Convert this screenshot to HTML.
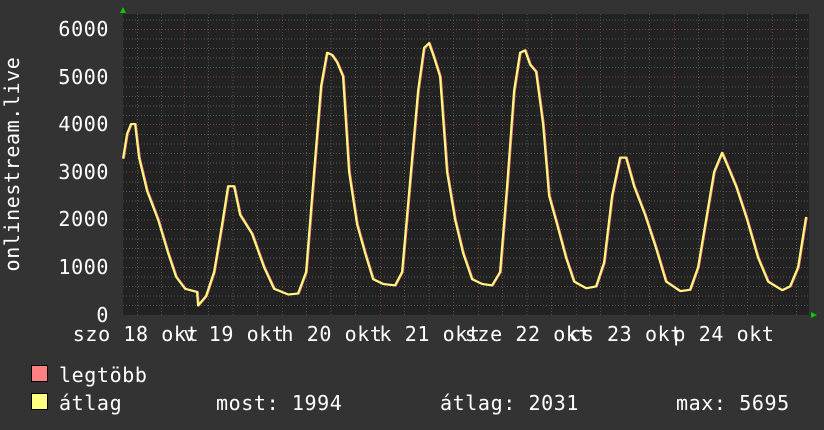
<!DOCTYPE html>
<html><head><meta charset="utf-8"><style>
html,body{margin:0;padding:0;background:#333;}
svg{display:block}
text{font-family:"DejaVu Sans Mono","Liberation Mono",monospace;font-size:20px;fill:#fff;letter-spacing:0.6px}
</style></head><body>
<svg width="824" height="430" xmlns="http://www.w3.org/2000/svg">
<rect width="824" height="430" fill="#333"/>
<rect x="123" y="14" width="686" height="301" fill="#222"/>
<g stroke="#555" stroke-width="1" stroke-dasharray="1,2">
<path d="M123 305.5H809M123 296H809M123 286.5H809M123 277H809M123 258H809M123 248.5H809M123 239H809M123 229.5H809M123 210.5H809M123 201H809M123 191.5H809M123 182H809M123 163H809M123 153.5H809M123 144H809M123 134.5H809M123 115.5H809M123 106H809M123 96.5H809M123 87H809M123 67.5H809M123 58H809M123 48.5H809M123 39H809M123 20H809"/>
<path d="M137.5 14V315M161.5 14V315M208.5 14V315M233 14V315M257.5 14V315M306.5 14V315M331 14V315M355.5 14V315M404.5 14V315M429 14V315M453.5 14V315M502.5 14V315M527 14V315M551.5 14V315M600.5 14V315M625 14V315M649.5 14V315M698.5 14V315M723 14V315M747.5 14V315M796.5 14V315"/>
</g>
<g stroke="#7a3a3a" stroke-width="1" stroke-dasharray="1,2">
<path d="M123 29.5H809M123 77H809M123 124.5H809M123 172H809M123 220H809M123 267.5H809"/>
<path d="M184.5 14V315M282.5 14V315M380.5 14V315M478.5 14V315M576.5 14V315M674.5 14V315M772.5 14V315"/>
</g>
<g fill="none" stroke-width="2" stroke-linejoin="round">
<polyline stroke="#ff8080" transform="translate(0.8,0)" points="123,158.6 127,133.7 131,124 135,124 139,157.6 147,191 158,219.6 168,253 176,276.8 185,288.8 197,292 198,305.5 206,296 214,272 222,224.4 228,186.2 234,186.2 240,214.8 252,233.9 264,267.3 274,288.8 288,294.5 298,293.5 306,272 314,171.9 321,86 327,52.7 332,55 337,62.2 343,76.5 349,171.9 357,224.4 365,253 373,279.2 383,284 395,285.4 402,272 410,181.4 418,90.8 424,47.9 429,43.1 434,57.4 440,76.5 447,171.9 455,219.6 463,253 472,279.2 482,284 492,285.4 500,272 507,186.2 514,90.8 520,52.7 525,50.3 530,64.6 536,71.7 543,124 549,195.7 557,224.4 566,257.8 574,281.6 586,288.3 596,286.4 604,262.5 612,195.7 620,157.6 626,157.6 634,186.2 645,214.8 656,248.2 666,281.6 680,291.1 690,289.7 698,267.3 706,219.6 714,171.9 722,152.8 728,167 736,186.2 747,219.6 758,257.8 768,281.6 782,290.2 790,286.4 798,267.3 806,217"/>
<polyline stroke="#ffff80" points="123,158.6 127,133.7 131,124 135,124 139,157.6 147,191 158,219.6 168,253 176,276.8 185,288.8 197,292 198,305.5 206,296 214,272 222,224.4 228,186.2 234,186.2 240,214.8 252,233.9 264,267.3 274,288.8 288,294.5 298,293.5 306,272 314,171.9 321,86 327,52.7 332,55 337,62.2 343,76.5 349,171.9 357,224.4 365,253 373,279.2 383,284 395,285.4 402,272 410,181.4 418,90.8 424,47.9 429,43.1 434,57.4 440,76.5 447,171.9 455,219.6 463,253 472,279.2 482,284 492,285.4 500,272 507,186.2 514,90.8 520,52.7 525,50.3 530,64.6 536,71.7 543,124 549,195.7 557,224.4 566,257.8 574,281.6 586,288.3 596,286.4 604,262.5 612,195.7 620,157.6 626,157.6 634,186.2 645,214.8 656,248.2 666,281.6 680,291.1 690,289.7 698,267.3 706,219.6 714,171.9 722,152.8 728,167 736,186.2 747,219.6 758,257.8 768,281.6 782,290.2 790,286.4 798,267.3 806,217"/>
</g>
<polygon points="120,13 126,13 123,7" fill="#0c0"/>
<polygon points="811,312 811,318 817,315" fill="#0c0"/>
<g text-anchor="end">
<text x="109" y="36">6000</text>
<text x="109" y="84">5000</text>
<text x="109" y="131">4000</text>
<text x="109" y="179">3000</text>
<text x="109" y="226">2000</text>
<text x="109" y="274">1000</text>
<text x="109" y="322">0</text>
</g>
<text x="0" y="0" text-anchor="middle" transform="translate(19,164) rotate(-90)">onlinestream.live</text>
<g text-anchor="middle">
<text x="136" y="341">szo 18 okt</text>
<text x="234" y="341">v 19 okt</text>
<text x="332" y="341">h 20 okt</text>
<text x="430" y="341">k 21 okt</text>
<text x="528" y="341">sze 22 okt</text>
<text x="626" y="341">cs 23 okt</text>
<text x="724" y="341">p 24 okt</text>
</g>
<rect x="31.5" y="365.5" width="16" height="16" fill="#ff8080" stroke="#000"/>
<rect x="31.5" y="393.5" width="16" height="16" fill="#ffff80" stroke="#000"/>
<text x="59" y="382">legtöbb</text>
<text x="59" y="410">átlag</text>
<text x="216" y="410">most: 1994</text>
<text x="440" y="410">átlag: 2031</text>
<text x="676" y="410">max: 5695</text>
</svg>
</body></html>
